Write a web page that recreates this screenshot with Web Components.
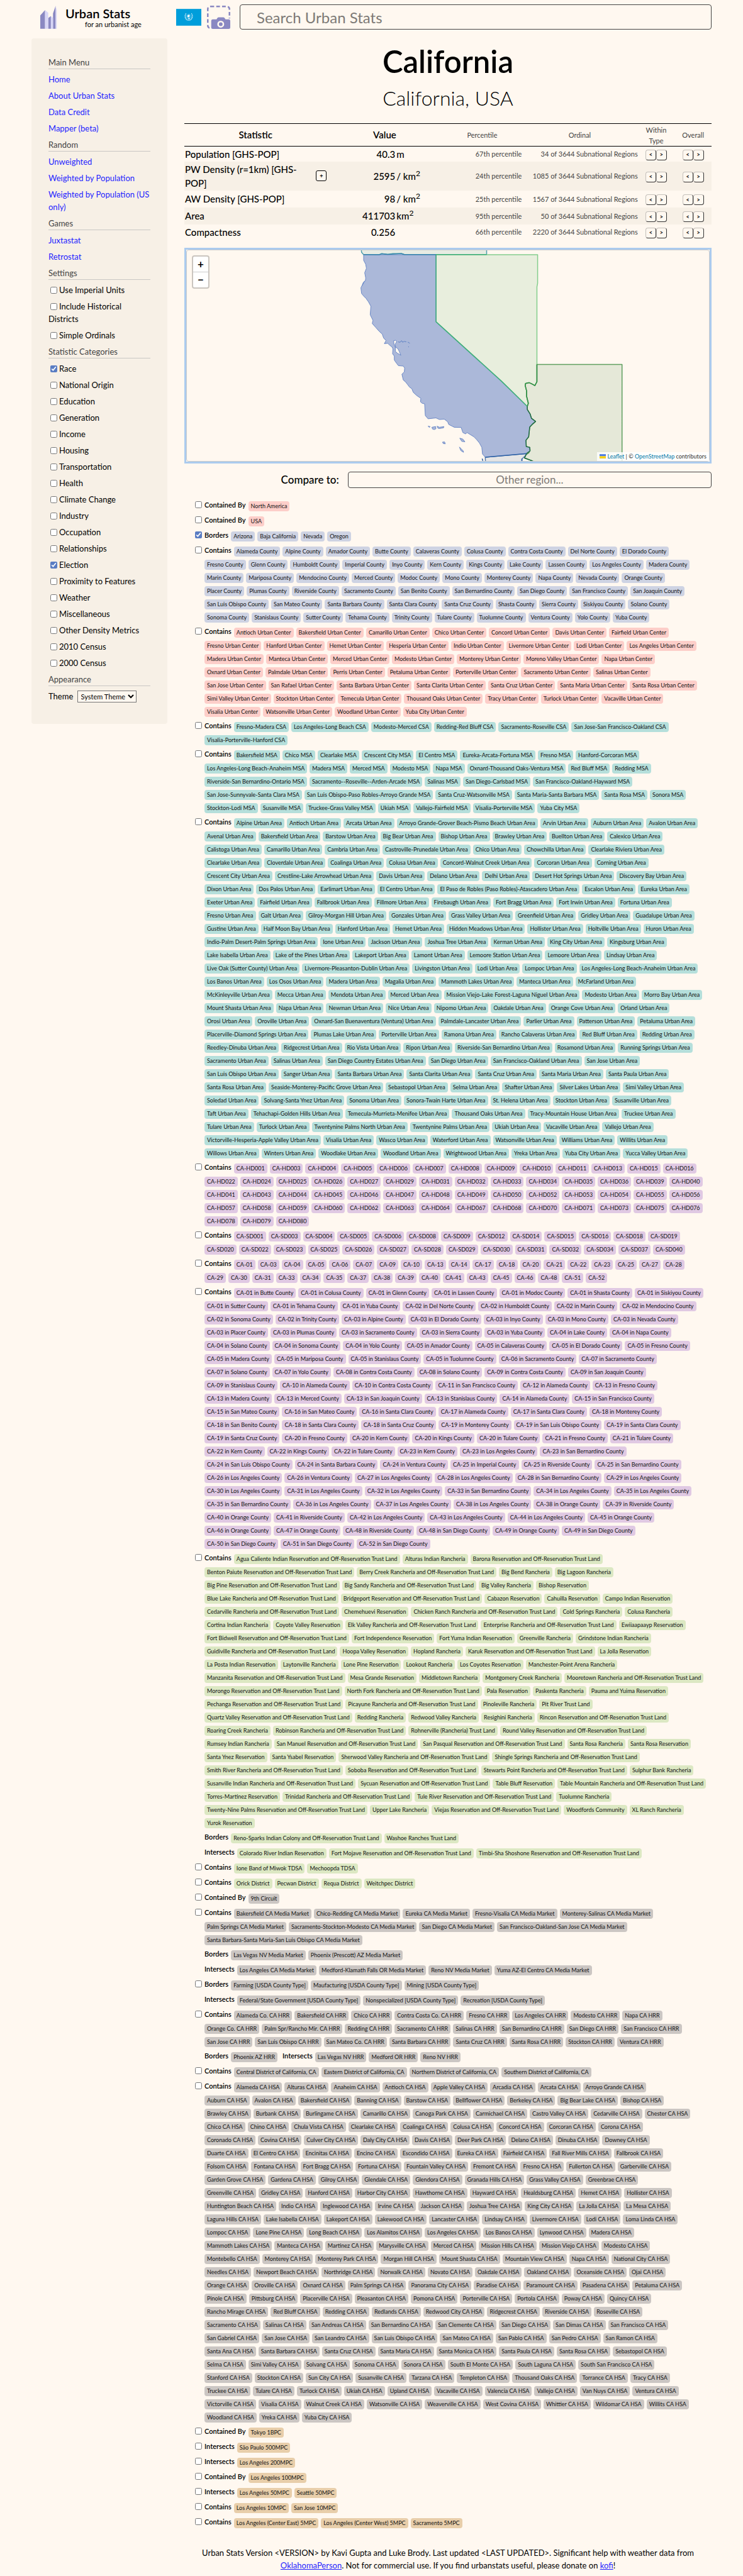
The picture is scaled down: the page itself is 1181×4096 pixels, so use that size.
<!DOCTYPE html>
<html lang="en">
<head>
<meta charset="utf-8">
<title>California</title>
<meta name="viewport" content="width=device-width, initial-scale=1">
<style>
  html { background: #fff8f0; }
  body {
    margin: 0;
    background: #fff8f0;
    color: #000;
    font-family: Lato, "Open Sans", sans-serif;
    --page: #fff8f0;
    --panel: #f7f0e6;
    --muted: #444;
    --link: #1f1fff;
    --brand: #8a88c2;
    --brand-light: #d8d6f6;
    --accent: #5a7dc3;
  }
</style>
</head>
<body>
<urban-page>
  <urban-header slot="header"></urban-header>
  <urban-sidebar slot="sidebar"></urban-sidebar>
  <region-title name="California" place="California, USA"></region-title>
  <stat-table></stat-table>
  <region-map></region-map>
  <compare-box></compare-box>
  <related-list></related-list>
  <page-footer></page-footer>
</urban-page>

<script>
const CHECKBOX_CSS = `
  input[type=checkbox] { width: 11px; height: 11px; margin: 0; accent-color: var(--accent); }
`;

function define(name, html, setup) {
  customElements.define(name, class extends HTMLElement {
    constructor() {
      super();
      this.attachShadow({ mode: 'open' }).innerHTML = html;
    }
    connectedCallback() {
      if (setup && !this.ready) { this.ready = true; setup(this, this.shadowRoot); }
    }
  });
}

define('urban-page', `
  <style>
    :host { display: block; padding: 7px 50px 6px; }
    .body { display: grid; grid-template-columns: 216px minmax(0, 1fr); gap: 27px; align-items: start; margin-top: 14px; }
    @media (max-width: 800px) { .body { grid-template-columns: 1fr; } }
  </style>
  <slot name="header"></slot>
  <div class="body">
    <slot name="sidebar"></slot>
    <main><slot></slot></main>
  </div>`);

define('urban-header', `
  <style>
    :host { display: flex; align-items: center; height: 40px; padding-left: 14px; }
    .brand { display: flex; gap: 13px; width: 216px; color: inherit; text-decoration: none; align-items: center; }
    .brand svg { width: 27px; height: 37px; flex: none; }
    .name { display: block; font-size: 20px; line-height: 22px; font-weight: 600; }
    .tag { display: block; font-size: 11px; line-height: 13px; padding-left: 31px; }
    .flag { display: block; width: 40px; height: 27px; padding: 0; border: 0; background: none; }
    .flag svg { display: block; width: 100%; height: 100%; }
    .shot { display: block; width: 37px; height: 37px; margin: 0 15px 0 9px; padding: 0; border: 0; background: none; }
    .shot svg { display: block; width: 100%; height: 100%; }
    input { flex: 1; min-width: 0; box-sizing: border-box; height: 40px; margin: 0; padding: 0 26px;
      border: 1px solid #444; border-radius: 4px; background: var(--page); font: 24px Lato, sans-serif; color: #000; }
    input::placeholder { color: #7d7a76; opacity: 1; }
  </style>
  <a class="brand" href="#home">
    <svg viewBox="0 0 32 43" aria-hidden="true">
      <path fill="var(--brand)" d="M0 43V18L9 8v35zM15 43V23l5-4v24zM24 43V14L29 0v43z"/>
      <path fill="var(--brand-light)" d="M9 8l6 5v30H9zM20 19l4 4v20h-4zM29 0l2 8v35h-2z"/>
    </svg>
    <span><span class="name">Urban Stats</span><span class="tag">for an urbanist age</span></span>
  </a>
  <button class="flag" aria-label="Choose universe">
    <svg viewBox="0 0 48 32">
      <rect width="48" height="32" fill="#009edb"/>
      <g fill="none" stroke="#fff" stroke-width="1">
        <circle cx="24" cy="15.500" r="5.500" stroke-width=".6" opacity=".6"/>
        <circle cx="24" cy="15.500" r="3" stroke-width=".5" opacity=".6"/>
        <path d="M19 8.500c-4 5-2 12 4.500 13.500M29 8.500c4 5 2 12-4.500 13.500" stroke-width="1.400" stroke-dasharray="1.300 .5" opacity=".85"/>
        <path d="M24 10v11M18.500 15.500h11M21 12l6 7M27 12l-6 7" stroke-width=".4" opacity=".6"/>
      </g>
      <path fill="#fff" d="M22 12l3-1 1 2-1 2-2 1-2-2zM24 17l2 1-1 2-2-1z"/>
    </svg>
  </button>
  <button class="shot" aria-label="Take a screenshot">
    <svg viewBox="0 0 44 44">
      <rect x="1.500" y="1.500" width="41" height="41" rx="5" fill="none" stroke="var(--brand)" stroke-width="3" stroke-dasharray="7 4"/>
      <path fill="var(--page)" d="M5 24h39v20H5z"/>
      <path fill="var(--brand)" d="M8 29a3 3 0 0 1 3-3h7l2-3q1-1 2-1h9q1 0 2 1l2 3h6a3 3 0 0 1 3 3v12a3 3 0 0 1-3 3H11a3 3 0 0 1-3-3z"/>
      <circle cx="26" cy="35" r="5" fill="var(--brand)" stroke="var(--page)" stroke-width="3"/>
    </svg>
  </button>
  <input type="text" aria-label="Search Urban Stats" placeholder="Search Urban Stats">`);

define('urban-sidebar', `
  <style>
    :host { display: block; background: var(--panel); border-radius: 4px; padding: 28px 27px 34px; font-size: 13px; line-height: 20px; }
    h2 { margin: 0 0 6px; font-size: 13px; font-weight: 400; line-height: 20px; color: var(--muted); border-bottom: 1px solid #c9c7c4; }
    ul { list-style: none; margin: 0; padding: 0; }
    li { margin-bottom: 6px; }
    section:last-child li { margin-bottom: 0; }
    a { color: var(--link); text-decoration: none; }
    ${CHECKBOX_CSS}
    li input[type=checkbox] { margin: 0 3px; vertical-align: -1px; }
    select { height: 19px; margin: 0 0 0 3px; padding: 0 0 0 1px; box-sizing: border-box; font: 11px Lato, sans-serif;
      background: var(--page); color: #000; border: 1px solid #767676; border-radius: 0; }
  </style>
  <nav></nav>`,
(host, root) => {
  const links = (...names) => names.map(n => `<li><a href="#${encodeURIComponent(n)}">${n}</a></li>`).join('');
  let id = 0;
  const boxes = (...names) => names.map(n => {
    const on = n.startsWith('+');
    const key = 'setting-' + id++;
    return `<li><input type="checkbox" id="${key}"${on ? ' checked' : ''}><label for="${key}">${on ? n.slice(1) : n}</label></li>`;
  }).join('');
  const section = (title, items) => `<section><h2>${title}</h2><ul>${items}</ul></section>`;
  root.querySelector('nav').innerHTML =
    section('Main Menu', links('Home', 'About Urban Stats', 'Data Credit', 'Mapper (beta)')) +
    section('Random', links('Unweighted', 'Weighted by Population', 'Weighted by Population (US only)')) +
    section('Games', links('Juxtastat', 'Retrostat')) +
    section('Settings', boxes('Use Imperial Units', 'Include Historical Districts', 'Simple Ordinals')) +
    section('Statistic Categories', boxes('+Race', 'National Origin', 'Education', 'Generation', 'Income', 'Housing',
      'Transportation', 'Health', 'Climate Change', 'Industry', 'Occupation', 'Relationships', '+Election',
      'Proximity to Features', 'Weather', 'Miscellaneous', 'Other Density Metrics', '2010 Census', '2000 Census')) +
    section('Appearance', `<li><label for="theme">Theme</label> <select id="theme"><option>System Theme</option><option>Light Mode</option><option>Dark Mode</option></select></li>`);
});

define('region-title', `
  <style>
    :host { display: block; text-align: center; padding-top: 7px; }
    h1 { margin: 0; font-size: 49px; line-height: 58px; font-weight: 600; }
    p { margin: 6px 0 16px; font-size: 32px; line-height: 48px; font-weight: 300; }
  </style>
  <h1></h1><p></p>`,
(host, root) => {
  root.querySelector('h1').textContent = host.getAttribute('name');
  root.querySelector('p').textContent = host.getAttribute('place');
});

define('stat-table', `
  <style>
    :host { display: block; }
    table { width: 100%; table-layout: fixed; border-collapse: collapse; }
    th, td { padding: 0; }
    thead th { height: 35px; border-top: 1px solid #000; border-bottom: 1px solid #000; font-size: 15px; line-height: 17px; font-weight: 600; }
    thead th.minor { padding: 0 8px; font-size: 11px; font-weight: 400; color: var(--muted); }
    tbody tr { height: 27px; }
    tbody tr.short { height: 24px; }
    tbody tr.tall { height: 46px; }
    tbody tr:nth-child(even) { background: var(--panel); }
    tbody th { text-align: left; padding-left: 1px; font-size: 15px; line-height: 22px; font-weight: 500; }
    .stat { display: flex; align-items: center; justify-content: space-between; }
    .stat span { max-width: 190px; }
    .value { display: grid; grid-template-columns: 109px 1fr; gap: 2px; font-size: 15px; line-height: 22px; font-weight: 500; }
    .num { text-align: right; }
    sup { font-size: 12px; line-height: 0; }
    td.minor { font-size: 11px; text-align: right; color: var(--muted); }
    td.nav { text-align: center; line-height: 0; }
    button { box-sizing: border-box; width: 17px; height: 17px; padding: 0; margin: 0; border: 1px solid; border-color: #c4c0bb #333 #333 #c4c0bb;
      border-radius: 4px; background: var(--page); color: #000; font: 700 9px/12px Lato, sans-serif; }
    .nav button { margin-top: 3px; }
    .stat button { border-color: #000; border-radius: 3px; }
  </style>
  <table>
    <colgroup><col style="width:27%"><col style="width:22%"><col style="width:15%"><col style="width:22%"><col style="width:7%"><col style="width:7%"></colgroup>
    <thead><tr><th>Statistic</th><th>Value</th><th class="minor">Percentile</th><th class="minor">Ordinal</th><th class="minor">Within Type</th><th class="minor">Overall</th></tr></thead>
    <tbody></tbody>
  </table>`,
(host, root) => {
  const nav = '<td class="nav"><button aria-label="Previous">&lt;</button><button aria-label="Next">&gt;</button></td>';
  const rows = [
    ['Population [GHS-POP]', '40.3', 'm', '67', '34', 'short'],
    ['PW Density (r=1km) [GHS-POP]', '2595', '/ km<sup>2</sup>', '24', '1085', 'tall', 1],
    ['AW Density [GHS-POP]', '98', '/ km<sup>2</sup>', '25', '1567', ''],
    ['Area', '411703', 'km<sup>2</sup>', '95', '50', ''],
    ['Compactness', '0.256', '', '66', '2220', 'short'],
  ];
  root.querySelector('tbody').innerHTML = rows.map(([name, num, unit, pct, ord, size, more]) => `
    <tr class="${size}">
      <th scope="row"><div class="stat"><span>${name}</span>${more ? '<button aria-label="Expand">+</button>' : ''}</div></th>
      <td><div class="value"><span class="num">${num}</span><span>${unit}</span></div></td>
      <td class="minor">${pct}th percentile</td>
      <td class="minor">${ord} of 3644 Subnational Regions</td>
      ${nav}${nav}
    </tr>`).join('');
});

define('region-map', `
  <style>
    :host { display: block; margin-top: 13px; }
    .frame { position: relative; box-sizing: border-box; height: 343px; border: 3px solid #abcbee; overflow: hidden; }
    .view { display: block; box-sizing: border-box; width: 100%; height: 100%; border: 1px solid #ccc; border-radius: 4px; }
    .zoom { position: absolute; top: 9px; left: 9px; width: 24px; border: 2px solid #cac5bf; border-radius: 4px; background: #fff; }
    .zoom button { display: block; width: 100%; height: 24px; padding: 0; border: 0; background: none; color: #000; font: 700 17px/24px Lato, sans-serif; }
    .zoom button + button { border-top: 1px solid #ccc; height: 25px; }
    .credit { position: absolute; right: 1px; bottom: 1px; display: flex; align-items: center; gap: 3px; height: 14px; padding: 0 4px;
      background: rgba(255, 255, 255, .8); font-size: 9px; line-height: 14px; color: #333; }
    .credit a { color: #0078a8; text-decoration: none; }
    .credit svg { width: 10px; height: 7px; }
    path { vector-effect: non-scaling-stroke; }
  </style>
  <div class="frame">
    <svg class="view" viewBox="0 0 984 398" preserveAspectRatio="xMidYMin meet" role="img" aria-label="Map of California and its neighbours">
      <g transform="translate(-12 -11) scale(.6506 .3333)" stroke-width="1.500" stroke-linejoin="round">
        <path fill="#e7ece3" stroke="#4d9fae" d="M523 25L524 45 530 58 575 58 582 52 600 56 615 52 640 52 648 57 887 57 887 25z"/>
        <path fill="#e8eedd" stroke="#82cd8c" d="M740 58L1035 58 1035 220 1033 240 1033 778 1027 800 1018 790 1010 783 1000 788 999 800 1003 830 1003 860 1008 900 1005 918 930 775 740 438z"/>
        <path fill="#e5e8d8" stroke="#5f9f5f" d="M1033 680L1280 680 1280 1260 1060 1260 1020 1227 997 1210 999 1195 1010 1180 1013 1165 1012 1150 1002 1145 1001 1110 1009 1090 1012 1035 1019 1020 1029 1003 1017 985 1013 960 1005 935 1005 918 1008 900 1003 860 1003 830 999 800 1000 788 1010 783 1018 790 1027 800 1033 778z"/>
        <path fill="#e6e6e6" stroke="#5a7fb0" d="M883 1206L1003 1185 999 1198 990 1215 989 1245 884 1245z"/>
        <path fill="#abb8d9" fill-rule="evenodd" stroke="#6b89c8" stroke-width="1" d="M530 58L530 90 536 112 538 135 533 160 536 190 535 206 529 215 526 230 522 245 524 278 530 292 537 306 544 325 551 350 549 398 557 430 555 448 565 470 575 492 584 508 588 530 595 545 590 562 600 560 606 572 612 580 615 592 614 620 619 632 619 655 625 672 631 687 645 689 649 700 648 722 641 735 645 768 652 780 658 795 663 808 670 818 674 838 684 856 696 872 695 892 700 900 707 903 709 970 717 988 740 983 750 992 764 990 774 1005 777 1020 787 1030 793 1036 813 1037 818 1066 826 1074 830 1066 840 1078 850 1090 858 1106 866 1125 873 1150 875 1188 883 1206 1003 1185 1013 1170 1012 1150 1002 1145 1001 1110 1009 1090 1012 1035 1019 1020 1029 1003 1017 985 1013 960 1005 935 1005 918 930 775 740 438 740 58zM617 546L622 543 626 548 624 558 621 565 623 582 630 592 633 605 638 628 628 616 622 606 622 582 618 566z"/>
        <path fill="none" stroke="#5f82c5" stroke-width="1" d="M630 552L636 554 640 545 643 554 648 549 654 552M658 553L664 560M660 578L661 582M526 232L533 206"/>
        <path fill="#abb8d9" stroke="#6b89c8" stroke-width="1" d="M717 1030L723 1032 721 1037zM728 1036L739 1032 740 1044 735 1049 730 1046zM743 1030L750 1036 757 1034 763 1032 762 1039 751 1043 746 1042zM759 1120L765 1119 767 1130 761 1128zM809 1098L818 1103 824 1118 815 1116zM808 1148L813 1158 819 1170 820 1178 812 1168z"/>
        <path fill="none" stroke="#3fae7c" d="M740 58L740 438 930 775 1005 918M740 57L887 57"/>
        <path fill="none" stroke="#3585ab" d="M530 57L575 58 582 53 600 56 640 52 648 57 740 57"/>
        <path fill="none" stroke="#2f8f46" d="M1033 680L1033 778 1027 800 1018 790 1010 783 1000 788 999 800 1003 830 1003 860 1008 900 1005 918"/>
        <path fill="none" stroke="#1f6b3f" d="M1005 918L1005 935 1013 960 1017 985 1029 1003 1019 1020 1012 1035 1009 1090 1001 1110 1002 1145 1012 1150 1013 1170 1003 1185 997 1210 1020 1227"/>
        <path fill="none" stroke="#2f62a6" d="M883 1206L1003 1185M874 1214L876 1226M989 1214L989 1230"/>
      </g>
    </svg>
    <div class="zoom"><button aria-label="Zoom in">+</button><button aria-label="Zoom out">−</button></div>
    <div class="credit">
      <svg viewBox="0 0 12 8" aria-hidden="true"><path fill="#4c7be1" d="M0 0h12v4H0z"/><path fill="#ffd500" d="M0 4h12v3H0z"/><path fill="#e0bc00" d="M0 7h12v1H0z"/></svg>
      <span><a href="#leaflet">Leaflet</a> | © <a href="#osm">OpenStreetMap</a> contributors</span>
    </div>
  </div>`);

define('compare-box', `
  <style>
    :host { display: flex; align-items: center; justify-content: flex-end; gap: 14px; margin-top: 13px; }
    label { font-size: 17px; line-height: 26px; font-weight: 500; }
    input { width: 69%; box-sizing: border-box; height: 26px; margin: 0; padding: 0 8px; text-align: center;
      border: 1px solid #444; border-radius: 4px; background: var(--page); font: 17px Lato, sans-serif; color: #000; }
    input::placeholder { color: #7d7a76; opacity: 1; }
  </style>
  <label for="other">Compare to:</label><input id="other" type="text" placeholder="Other region...">`);

define('related-group', `
  <style>
    :host { display: flex; gap: 4px; margin-bottom: 8px; padding-left: 17px; }
    .check { width: 11px; flex: none; line-height: 0; }
    ${CHECKBOX_CSS}
    .lines { display: flex; flex-direction: column; gap: 5px; min-width: 0; }
    .line { display: flex; gap: 4px; }
    .line > * { flex: none; white-space: nowrap; }
    .label { font-size: 11px; line-height: 12px; font-weight: 600; }
    a + .label { margin-left: 4px; }
    a { box-sizing: border-box; height: 16px; padding: 0 4px; border-radius: 4px; background: var(--chip);
      color: #111; font-size: 9px; line-height: 16px; text-decoration: none; }
    @media (max-width: 1100px) { .line { flex-wrap: wrap; } }
  </style>
  <div class="check"></div><div class="lines"></div>`,
(host, root) => {
  const { box, color, lines } = host.data;
  host.style.setProperty('--chip', color);
  if (box) {
    const input = document.createElement('input');
    input.type = 'checkbox';
    input.checked = box === 'on';
    input.setAttribute('aria-label', 'Show on map');
    root.querySelector('.check').append(input);
  }
  for (const line of lines) {
    const row = document.createElement('div');
    row.className = 'line';
    for (const item of line.split('|')) {
      const el = document.createElement(item[0] === '*' ? 'span' : 'a');
      if (item[0] === '*') { el.className = 'label'; el.textContent = item.slice(1); }
      else { el.href = '#' + encodeURIComponent(item); el.textContent = item; }
      row.append(el);
    }
    root.querySelector('.lines').append(row);
  }
});

const RED = '#fdcec9', BLUE = '#ced3e3', TEAL = '#b5dfdb', PURPLE = '#e0c9e3', GREEN = '#dce8c3', GRAY = '#cbc6c3', TAN = '#e8ceaa';
const suffixed = (tail, lines) => lines.map(l => l.split('|').map(n => n[0] === '*' ? n : n + tail).join('|'));
const GROUPS = [
  ['off', RED, ['*Contained By|North America']],
  ['off', RED, ['*Contained By|USA']],
  ['on', BLUE, ['*Borders|Arizona|Baja California|Nevada|Oregon']],
  ['off', BLUE, suffixed(' County', [
    '*Contains|Alameda|Alpine|Amador|Butte|Calaveras|Colusa|Contra Costa|Del Norte|El Dorado',
    'Fresno|Glenn|Humboldt|Imperial|Inyo|Kern|Kings|Lake|Lassen|Los Angeles|Madera',
    'Marin|Mariposa|Mendocino|Merced|Modoc|Mono|Monterey|Napa|Nevada|Orange',
    'Placer|Plumas|Riverside|Sacramento|San Benito|San Bernardino|San Diego|San Francisco|San Joaquin',
    'San Luis Obispo|San Mateo|Santa Barbara|Santa Clara|Santa Cruz|Shasta|Sierra|Siskiyou|Solano',
    'Sonoma|Stanislaus|Sutter|Tehama|Trinity|Tulare|Tuolumne|Ventura|Yolo|Yuba'])],
  ['off', RED, suffixed(' Urban Center', [
    '*Contains|Antioch|Bakersfield|Camarillo|Chico|Concord|Davis|Fairfield',
    'Fresno|Hanford|Hemet|Hesperia|Indio|Livermore|Lodi|Los Angeles',
    'Madera|Manteca|Merced|Modesto|Monterey|Moreno Valley|Napa',
    'Oxnard|Palmdale|Perris|Petaluma|Porterville|Sacramento|Salinas',
    'San Jose|San Rafael|Santa Barbara|Santa Clarita|Santa Cruz|Santa Maria|Santa Rosa',
    'Simi Valley|Stockton|Temecula|Thousand Oaks|Tracy|Turlock|Vacaville',
    'Visalia|Watsonville|Woodland|Yuba City'])],
  ['off', TEAL, suffixed(' CSA', [
    '*Contains|Fresno-Madera|Los Angeles-Long Beach|Modesto-Merced|Redding-Red Bluff|Sacramento-Roseville|San Jose-San Francisco-Oakland',
    'Visalia-Porterville-Hanford'])],
  ['off', TEAL, suffixed(' MSA', [
    '*Contains|Bakersfield|Chico|Clearlake|Crescent City|El Centro|Eureka-Arcata-Fortuna|Fresno|Hanford-Corcoran',
    'Los Angeles-Long Beach-Anaheim|Madera|Merced|Modesto|Napa|Oxnard-Thousand Oaks-Ventura|Red Bluff|Redding',
    'Riverside-San Bernardino-Ontario|Sacramento--Roseville--Arden-Arcade|Salinas|San Diego-Carlsbad|San Francisco-Oakland-Hayward',
    'San Jose-Sunnyvale-Santa Clara|San Luis Obispo-Paso Robles-Arroyo Grande|Santa Cruz-Watsonville|Santa Maria-Santa Barbara|Santa Rosa|Sonora',
    'Stockton-Lodi|Susanville|Truckee-Grass Valley|Ukiah|Vallejo-Fairfield|Visalia-Porterville|Yuba City'])],
  ['off', TEAL, suffixed(' Urban Area', [
    '*Contains|Alpine|Antioch|Arcata|Arroyo Grande-Grover Beach-Pismo Beach|Arvin|Auburn|Avalon',
    'Avenal|Bakersfield|Barstow|Big Bear|Bishop|Brawley|Buellton|Calexico',
    'Calistoga|Camarillo|Cambria|Castroville-Prunedale|Chico|Chowchilla|Clearlake Riviera',
    'Clearlake|Cloverdale|Coalinga|Colusa|Concord-Walnut Creek|Corcoran|Corning',
    'Crescent City|Crestline-Lake Arrowhead|Davis|Delano|Delhi|Desert Hot Springs|Discovery Bay',
    'Dixon|Dos Palos|Earlimart|El Centro|El Paso de Robles (Paso Robles)-Atascadero|Escalon|Eureka',
    'Exeter|Fairfield|Fallbrook|Fillmore|Firebaugh|Fort Bragg|Fort Irwin|Fortuna',
    'Fresno|Galt|Gilroy-Morgan Hill|Gonzales|Grass Valley|Greenfield|Gridley|Guadalupe',
    'Gustine|Half Moon Bay|Hanford|Hemet|Hidden Meadows|Hollister|Holtville|Huron',
    'Indio-Palm Desert-Palm Springs|Ione|Jackson|Joshua Tree|Kerman|King City|Kingsburg',
    'Lake Isabella|Lake of the Pines|Lakeport|Lamont|Lemoore Station|Lemoore|Lindsay',
    'Live Oak (Sutter County)|Livermore-Pleasanton-Dublin|Livingston|Lodi|Lompoc|Los Angeles-Long Beach-Anaheim',
    'Los Banos|Los Osos|Madera|Magalia|Mammoth Lakes|Manteca|McFarland',
    'McKinleyville|Mecca|Mendota|Merced|Mission Viejo-Lake Forest-Laguna Niguel|Modesto|Morro Bay',
    'Mount Shasta|Napa|Newman|Nice|Nipomo|Oakdale|Orange Cove|Orland',
    'Orosi|Oroville|Oxnard-San Buenaventura (Ventura)|Palmdale-Lancaster|Parlier|Patterson|Petaluma',
    'Placerville-Diamond Springs|Plumas Lake|Porterville|Ramona|Rancho Calaveras|Red Bluff|Redding',
    'Reedley-Dinuba|Ridgecrest|Rio Vista|Ripon|Riverside-San Bernardino|Rosamond|Running Springs',
    'Sacramento|Salinas|San Diego Country Estates|San Diego|San Francisco-Oakland|San Jose',
    'San Luis Obispo|Sanger|Santa Barbara|Santa Clarita|Santa Cruz|Santa Maria|Santa Paula',
    'Santa Rosa|Seaside-Monterey-Pacific Grove|Sebastopol|Selma|Shafter|Silver Lakes|Simi Valley',
    'Soledad|Solvang-Santa Ynez|Sonoma|Sonora-Twain Harte|St. Helena|Stockton|Susanville',
    'Taft|Tehachapi-Golden Hills|Temecula-Murrieta-Menifee|Thousand Oaks|Tracy-Mountain House|Truckee',
    'Tulare|Turlock|Twentynine Palms North|Twentynine Palms|Ukiah|Vacaville|Vallejo',
    'Victorville-Hesperia-Apple Valley|Visalia|Wasco|Waterford|Watsonville|Williams|Willits',
    'Willows|Winters|Woodlake|Woodland|Wrightwood|Yreka|Yuba City|Yucca Valley'])],
  ['off', PURPLE, [
    '*Contains|CA-HD001|CA-HD003|CA-HD004|CA-HD005|CA-HD006|CA-HD007|CA-HD008|CA-HD009|CA-HD010|CA-HD011|CA-HD013|CA-HD015|CA-HD016',
    'CA-HD022|CA-HD024|CA-HD025|CA-HD026|CA-HD027|CA-HD029|CA-HD031|CA-HD032|CA-HD033|CA-HD034|CA-HD035|CA-HD036|CA-HD039|CA-HD040',
    'CA-HD041|CA-HD043|CA-HD044|CA-HD045|CA-HD046|CA-HD047|CA-HD048|CA-HD049|CA-HD050|CA-HD052|CA-HD053|CA-HD054|CA-HD055|CA-HD056',
    'CA-HD057|CA-HD058|CA-HD059|CA-HD060|CA-HD062|CA-HD063|CA-HD064|CA-HD067|CA-HD068|CA-HD070|CA-HD071|CA-HD073|CA-HD075|CA-HD076',
    'CA-HD078|CA-HD079|CA-HD080']],
  ['off', PURPLE, [
    '*Contains|CA-SD001|CA-SD003|CA-SD004|CA-SD005|CA-SD006|CA-SD008|CA-SD009|CA-SD012|CA-SD014|CA-SD015|CA-SD016|CA-SD018|CA-SD019',
    'CA-SD020|CA-SD022|CA-SD023|CA-SD025|CA-SD026|CA-SD027|CA-SD028|CA-SD029|CA-SD030|CA-SD031|CA-SD032|CA-SD034|CA-SD037|CA-SD040']],
  ['off', PURPLE, [
    '*Contains|CA-01|CA-03|CA-04|CA-05|CA-06|CA-07|CA-09|CA-10|CA-13|CA-14|CA-17|CA-18|CA-20|CA-21|CA-22|CA-23|CA-25|CA-27|CA-28',
    'CA-29|CA-30|CA-31|CA-33|CA-34|CA-35|CA-37|CA-38|CA-39|CA-40|CA-41|CA-43|CA-45|CA-46|CA-48|CA-51|CA-52']],
  ['off', PURPLE, suffixed(' County', [
    '*Contains|CA-01 in Butte|CA-01 in Colusa|CA-01 in Glenn|CA-01 in Lassen|CA-01 in Modoc|CA-01 in Shasta|CA-01 in Siskiyou',
    'CA-01 in Sutter|CA-01 in Tehama|CA-01 in Yuba|CA-02 in Del Norte|CA-02 in Humboldt|CA-02 in Marin|CA-02 in Mendocino',
    'CA-02 in Sonoma|CA-02 in Trinity|CA-03 in Alpine|CA-03 in El Dorado|CA-03 in Inyo|CA-03 in Mono|CA-03 in Nevada',
    'CA-03 in Placer|CA-03 in Plumas|CA-03 in Sacramento|CA-03 in Sierra|CA-03 in Yuba|CA-04 in Lake|CA-04 in Napa',
    'CA-04 in Solano|CA-04 in Sonoma|CA-04 in Yolo|CA-05 in Amador|CA-05 in Calaveras|CA-05 in El Dorado|CA-05 in Fresno',
    'CA-05 in Madera|CA-05 in Mariposa|CA-05 in Stanislaus|CA-05 in Tuolumne|CA-06 in Sacramento|CA-07 in Sacramento',
    'CA-07 in Solano|CA-07 in Yolo|CA-08 in Contra Costa|CA-08 in Solano|CA-09 in Contra Costa|CA-09 in San Joaquin',
    'CA-09 in Stanislaus|CA-10 in Alameda|CA-10 in Contra Costa|CA-11 in San Francisco|CA-12 in Alameda|CA-13 in Fresno',
    'CA-13 in Madera|CA-13 in Merced|CA-13 in San Joaquin|CA-13 in Stanislaus|CA-14 in Alameda|CA-15 in San Francisco',
    'CA-15 in San Mateo|CA-16 in San Mateo|CA-16 in Santa Clara|CA-17 in Alameda|CA-17 in Santa Clara|CA-18 in Monterey',
    'CA-18 in San Benito|CA-18 in Santa Clara|CA-18 in Santa Cruz|CA-19 in Monterey|CA-19 in San Luis Obispo|CA-19 in Santa Clara',
    'CA-19 in Santa Cruz|CA-20 in Fresno|CA-20 in Kern|CA-20 in Kings|CA-20 in Tulare|CA-21 in Fresno|CA-21 in Tulare',
    'CA-22 in Kern|CA-22 in Kings|CA-22 in Tulare|CA-23 in Kern|CA-23 in Los Angeles|CA-23 in San Bernardino',
    'CA-24 in San Luis Obispo|CA-24 in Santa Barbara|CA-24 in Ventura|CA-25 in Imperial|CA-25 in Riverside|CA-25 in San Bernardino',
    'CA-26 in Los Angeles|CA-26 in Ventura|CA-27 in Los Angeles|CA-28 in Los Angeles|CA-28 in San Bernardino|CA-29 in Los Angeles',
    'CA-30 in Los Angeles|CA-31 in Los Angeles|CA-32 in Los Angeles|CA-33 in San Bernardino|CA-34 in Los Angeles|CA-35 in Los Angeles',
    'CA-35 in San Bernardino|CA-36 in Los Angeles|CA-37 in Los Angeles|CA-38 in Los Angeles|CA-38 in Orange|CA-39 in Riverside',
    'CA-40 in Orange|CA-41 in Riverside|CA-42 in Los Angeles|CA-43 in Los Angeles|CA-44 in Los Angeles|CA-45 in Orange',
    'CA-46 in Orange|CA-47 in Orange|CA-48 in Riverside|CA-48 in San Diego|CA-49 in Orange|CA-49 in San Diego',
    'CA-50 in San Diego|CA-51 in San Diego|CA-52 in San Diego'])],
  ['off', GREEN, [
    '*Contains|Agua Caliente Indian Reservation^|Alturas Indian Rancheria|Barona Reservation^',
    'Benton Paiute Reservation^|Berry Creek Rancheria^|Big Bend Rancheria|Big Lagoon Rancheria',
    'Big Pine Reservation^|Big Sandy Rancheria^|Big Valley Rancheria|Bishop Reservation',
    'Blue Lake Rancheria^|Bridgeport Reservation^|Cabazon Reservation|Cahuilla Reservation|Campo Indian Reservation',
    'Cedarville Rancheria^|Chemehuevi Reservation|Chicken Ranch Rancheria^|Cold Springs Rancheria|Colusa Rancheria',
    'Cortina Indian Rancheria|Coyote Valley Reservation|Elk Valley Rancheria^|Enterprise Rancheria^|Ewiiaapaayp Reservation',
    'Fort Bidwell Reservation^|Fort Independence Reservation|Fort Yuma Indian Reservation|Greenville Rancheria|Grindstone Indian Rancheria',
    'Guidiville Rancheria^|Hoopa Valley Reservation|Hopland Rancheria|Karuk Reservation^|La Jolla Reservation',
    'La Posta Indian Reservation|Laytonville Rancheria|Lone Pine Reservation|Lookout Rancheria|Los Coyotes Reservation|Manchester-Point Arena Rancheria',
    'Manzanita Reservation^|Mesa Grande Reservation|Middletown Rancheria|Montgomery Creek Rancheria|Mooretown Rancheria^',
    'Morongo Reservation^|North Fork Rancheria^|Pala Reservation|Paskenta Rancheria|Pauma and Yuima Reservation',
    'Pechanga Reservation^|Picayune Rancheria^|Pinoleville Rancheria|Pit River Trust Land',
    'Quartz Valley Reservation^|Redding Rancheria|Redwood Valley Rancheria|Resighini Rancheria|Rincon Reservation^',
    'Roaring Creek Rancheria|Robinson Rancheria^|Rohnerville (Rancheria) Trust Land|Round Valley Reservation^',
    'Rumsey Indian Rancheria|San Manuel Reservation^|San Pasqual Reservation^|Santa Rosa Rancheria|Santa Rosa Reservation',
    'Santa Ynez Reservation|Santa Ysabel Reservation|Sherwood Valley Rancheria^|Shingle Springs Rancheria^',
    'Smith River Rancheria^|Soboba Reservation^|Stewarts Point Rancheria^|Sulphur Bank Rancheria',
    'Susanville Indian Rancheria^|Sycuan Reservation^|Table Bluff Reservation|Table Mountain Rancheria^',
    'Torres-Martinez Reservation|Trinidad Rancheria^|Tule River Reservation^|Tuolumne Rancheria',
    'Twenty-Nine Palms Reservation^|Upper Lake Rancheria|Viejas Reservation^|Woodfords Community|XL Ranch Rancheria',
    'Yurok Reservation']],
  ['', GREEN, ['*Borders|Reno-Sparks Indian Colony^|Washoe Ranches Trust Land']],
  ['', GREEN, ['*Intersects|Colorado River Indian Reservation|Fort Mojave Reservation^|Timbi-Sha Shoshone Reservation^']],
  ['off', GREEN, ['*Contains|Ione Band of Miwok TDSA|Mechoopda TDSA']],
  ['off', GREEN, suffixed(' District', ['*Contains|Orick|Pecwan|Requa|Weitchpec'])],
  ['off', GRAY, ['*Contained By|9th Circuit']],
  ['off', GRAY, suffixed(' CA Media Market', [
    '*Contains|Bakersfield|Chico-Redding|Eureka|Fresno-Visalia|Monterey-Salinas',
    'Palm Springs|Sacramento-Stockton-Modesto|San Diego|San Francisco-Oakland-San Jose',
    'Santa Barbara-Santa Maria-San Luis Obispo'])],
  ['', GRAY, suffixed(' Media Market', ['*Borders|Las Vegas NV|Phoenix (Prescott) AZ'])],
  ['', GRAY, suffixed(' Media Market', ['*Intersects|Los Angeles CA|Medford-Klamath Falls OR|Reno NV|Yuma AZ-El Centro CA'])],
  ['off', GRAY, suffixed(' [USDA County Type]', ['*Borders|Farming|Maufacturing|Mining'])],
  ['', GRAY, suffixed(' [USDA County Type]', ['*Intersects|Federal/State Government|Nonspecialized|Recreation'])],
  ['off', GRAY, suffixed(' CA HRR', [
    '*Contains|Alameda Co.|Bakersfield|Chico|Contra Costa Co.|Fresno|Los Angeles|Modesto|Napa',
    'Orange Co.|Palm Spr/Rancho Mir.|Redding|Sacramento|Salinas|San Bernardino|San Diego|San Francisco',
    'San Jose|San Luis Obispo|San Mateo Co.|Santa Barbara|Santa Cruz|Santa Rosa|Stockton|Ventura'])],
  ['', GRAY, suffixed(' HRR', ['*Borders|Phoenix AZ|*Intersects|Las Vegas NV|Medford OR|Reno NV'])],
  ['off', GRAY, suffixed(' District of California, CA', ['*Contains|Central|Eastern|Northern|Southern'])],
  ['off', GRAY, suffixed(' CA HSA', [
    '*Contains|Alameda|Alturas|Anaheim|Antioch|Apple Valley|Arcadia|Arcata|Arroyo Grande',
    'Auburn|Avalon|Bakersfield|Banning|Barstow|Bellflower|Berkeley|Big Bear Lake|Bishop',
    'Brawley|Burbank|Burlingame|Camarillo|Canoga Park|Carmichael|Castro Valley|Cedarville|Chester',
    'Chico|Chino|Chula Vista|Clearlake|Coalinga|Colusa|Concord|Corcoran|Corona',
    'Coronado|Covina|Culver City|Daly City|Davis|Deer Park|Delano|Dinuba|Downey',
    'Duarte|El Centro|Encinitas|Encino|Escondido|Eureka|Fairfield|Fall River Mills|Fallbrook',
    'Folsom|Fontana|Fort Bragg|Fortuna|Fountain Valley|Fremont|Fresno|Fullerton|Garberville',
    'Garden Grove|Gardena|Gilroy|Glendale|Glendora|Granada Hills|Grass Valley|Greenbrae',
    'Greenville|Gridley|Hanford|Harbor City|Hawthorne|Hayward|Healdsburg|Hemet|Hollister',
    'Huntington Beach|Indio|Inglewood|Irvine|Jackson|Joshua Tree|King City|La Jolla|La Mesa',
    'Laguna Hills|Lake Isabella|Lakeport|Lakewood|Lancaster|Lindsay|Livermore|Lodi|Loma Linda',
    'Lompoc|Lone Pine|Long Beach|Los Alamitos|Los Angeles|Los Banos|Lynwood|Madera',
    'Mammoth Lakes|Manteca|Martinez|Marysville|Merced|Mission Hills|Mission Viejo|Modesto',
    'Montebello|Monterey|Monterey Park|Morgan Hill|Mount Shasta|Mountain View|Napa|National City',
    'Needles|Newport Beach|Northridge|Norwalk|Novato|Oakdale|Oakland|Oceanside|Ojai',
    'Orange|Oroville|Oxnard|Palm Springs|Panorama City|Paradise|Paramount|Pasadena|Petaluma',
    'Pinole|Pittsburg|Placerville|Pleasanton|Pomona|Porterville|Portola|Poway|Quincy',
    'Rancho Mirage|Red Bluff|Redding|Redlands|Redwood City|Ridgecrest|Riverside|Roseville',
    'Sacramento|Salinas|San Andreas|San Bernardino|San Clemente|San Diego|San Dimas|San Francisco',
    'San Gabriel|San Jose|San Leandro|San Luis Obispo|San Mateo|San Pablo|San Pedro|San Ramon',
    'Santa Ana|Santa Barbara|Santa Cruz|Santa Maria|Santa Monica|Santa Paula|Santa Rosa|Sebastopol',
    'Selma|Simi Valley|Solvang|Sonoma|Sonora|South El Monte|South Laguna|South San Francisco',
    'Stanford|Stockton|Sun City|Susanville|Tarzana|Templeton|Thousand Oaks|Torrance|Tracy',
    'Truckee|Tulare|Turlock|Ukiah|Upland|Vacaville|Valencia|Vallejo|Van Nuys|Ventura',
    'Victorville|Visalia|Walnut Creek|Watsonville|Weaverville|West Covina|Whittier|Wildomar|Willits',
    'Woodland|Yreka|Yuba City'])],
  ['off', TAN, ['*Contained By|Tokyo 1BPC']],
  ['off', TAN, ['*Intersects|São Paulo 500MPC']],
  ['off', TAN, ['*Intersects|Los Angeles 200MPC']],
  ['off', TAN, ['*Contained By|Los Angeles 100MPC']],
  ['off', TAN, ['*Intersects|Los Angeles 50MPC|Seattle 50MPC']],
  ['off', TAN, ['*Contains|Los Angeles 10MPC|San Jose 10MPC']],
  ['off', TAN, ['*Contains|Los Angeles (Center East) 5MPC|Los Angeles (Center West) 5MPC|Sacramento 5MPC']],
];

define('related-list', `
  <style>:host { display: block; margin-top: 21px; }</style>`,
(host, root) => {
  for (const [box, color, lines] of GROUPS) {
    const group = document.createElement('related-group');
    group.data = { box, color, lines: lines.map(l => l.replaceAll('^', ' and Off-Reservation Trust Land')) };
    root.append(group);
  }
});

define('page-footer', `
  <style>
    :host { display: block; margin-top: 29px; text-align: center; font-size: 13px; line-height: 20px; }
    a { color: var(--link); }
  </style>
  <div>Urban Stats Version &lt;VERSION&gt; by Kavi Gupta and Luke Brody. Last updated &lt;LAST UPDATED&gt;. Significant help with weather data from <a href="#oklahoma">OklahomaPerson</a>. Not for commercial use. If you find urbanstats useful, please donate on <a href="#kofi">kofi</a>!</div>`);
</script>
</body>
</html>
